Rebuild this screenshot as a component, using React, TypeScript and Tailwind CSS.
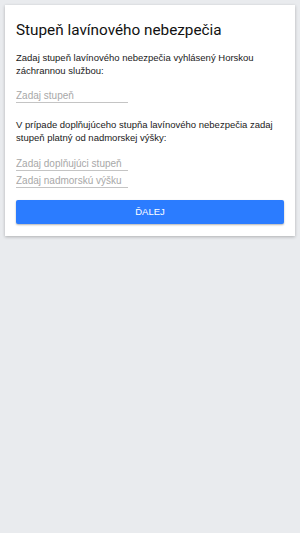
import React from 'react';

const Field = ({ placeholder }: { placeholder: string }) => (
  <input
    type="text"
    placeholder={placeholder}
    className="block w-[112px] border-0 border-b border-[#c4c4c4] bg-transparent p-0 text-[10px] leading-[14px] h-[14px] text-[#333] placeholder:text-[#a8a8a8] outline-none"
  />
);

export default function App() {
  return (
    <div className="min-h-[533px] w-full bg-[#e9ebee] p-[5px] font-['Liberation_Sans',Arial,sans-serif]">
      <div className="bg-white px-[11px] pt-[15px] pb-[12px] shadow-[0_1px_3px_rgba(0,0,0,0.25)]">
        <h1 className="font-['Roboto',sans-serif] text-[15.3px] leading-[20px] text-[#111]">
          Stupeň lavínového nebezpečia
        </h1>
        <p className="mt-[11px] text-[9.5px] leading-[13px] text-[#1a1a1a]">
          Zadaj stupeň lavínového nebezpečia vyhlásený Horskou záchrannou službou:
        </p>
        <div className="mt-[12px]">
          <Field placeholder="Zadaj stupeň" />
        </div>
        <p className="mt-[15px] text-[9.5px] leading-[13px] text-[#1a1a1a]">
          V prípade doplňujúceho stupňa lavínového nebezpečia zadaj stupeň platný od nadmorskej výšky:
        </p>
        <div className="mt-[13px] flex flex-col gap-[3px]">
          <Field placeholder="Zadaj doplňujúci stupeň" />
          <Field placeholder="Zadaj nadmorskú výšku" />
        </div>
        <button className="mt-[12px] block h-[24px] w-full rounded-[2px] bg-[#2b7cff] text-[9.5px] text-white shadow-[0_1px_2px_rgba(0,0,0,0.3)]">
          ĎALEJ
        </button>
      </div>
    </div>
  );
}
